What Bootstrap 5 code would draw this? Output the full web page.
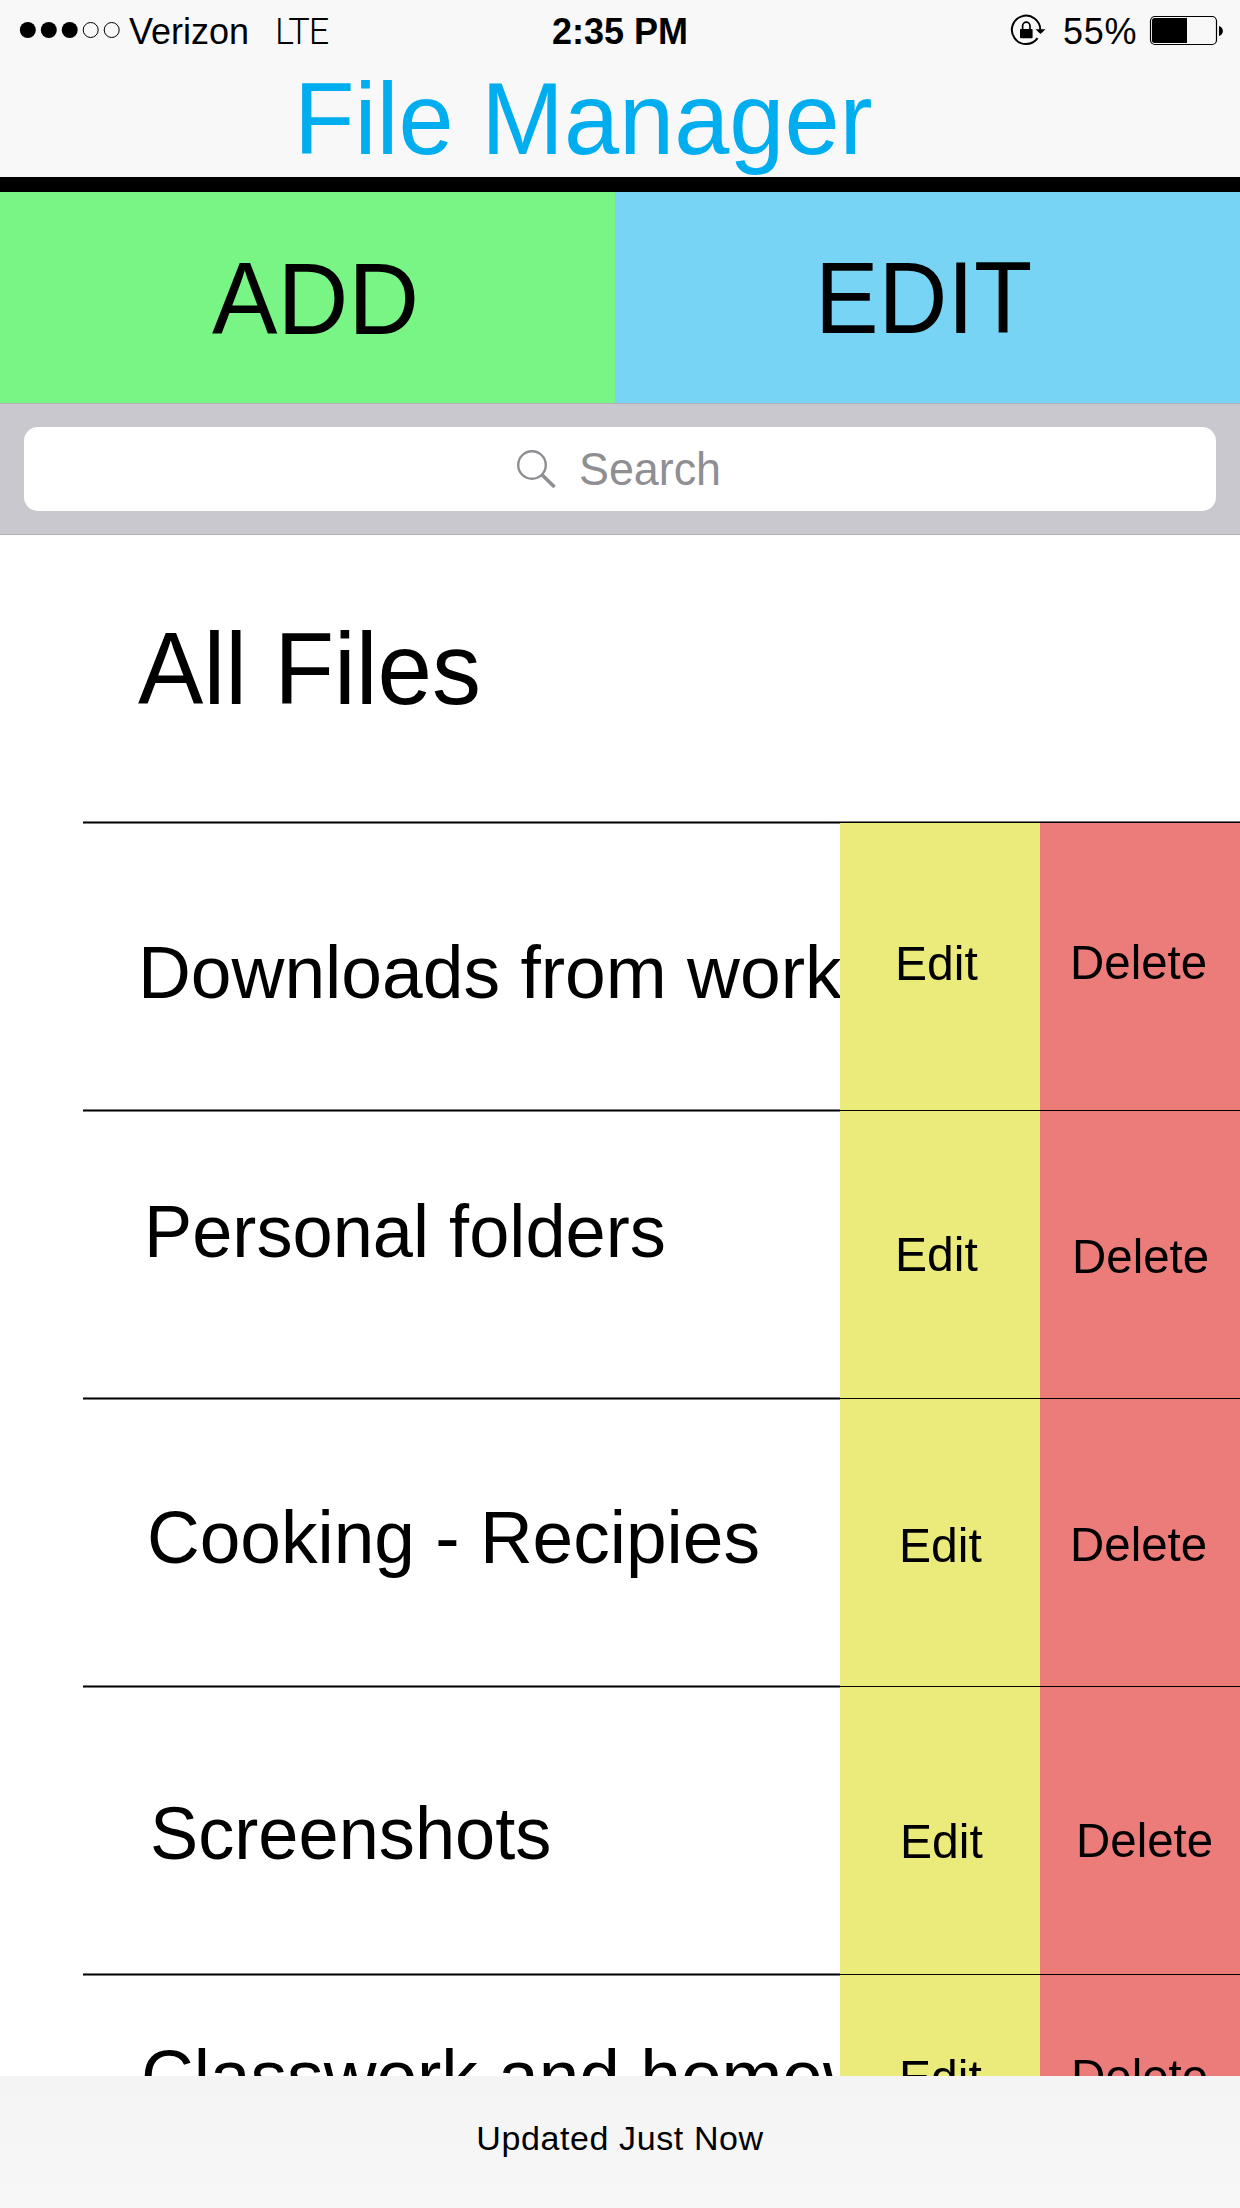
<!DOCTYPE html>
<html lang="en">
<head>
<meta charset="utf-8">
<meta name="viewport" content="width=device-width, initial-scale=1">
<title>File Manager</title>
<link href="https://cdn.jsdelivr.net/npm/bootstrap@5.3.0/dist/css/bootstrap.min.css" rel="stylesheet">
<style>
  body { font-family: "Liberation Sans", Arial, sans-serif; color: #000; line-height: 1; background: #fff; }
  .app { width: 1240px; height: 2208px; }
  .app .btn { --bs-btn-color: #000; --bs-btn-line-height: 1; --bs-btn-font-family: inherit; }
  .fit { display: inline-block; transform-origin: 0 0; white-space: nowrap; }

  .topbar { height: 192px; background: #f8f8f8; border-bottom: 15px solid #000; }
  .status { height: 67px; font-size: 36px; padding-top: 14px; }
  .status svg { display: block; margin-top: -14px; }
  .carrier { width: 146px; }
  .pct { letter-spacing: .8px; margin-right: -2.4px; }
  .net { font-family: Roboto, sans-serif; font-weight: 300; letter-spacing: -1px; }
  .title { font-size: 102px; font-weight: 400; color: #00aeef; padding: 1px 0 0 293.5px; line-height: 102px; }
  .title .fit { transform: scaleX(.972); }

  .actions { height: 211px; font-size: 102px; }
  .btn-add { width: 615px; background: #79f585; padding: 56px 0 0 212px; }
  .btn-edit { background: #78d4f4; padding: 55px 0 0 200px; }
  .btn-add .fit { transform: scaleX(.962); }
  .btn-edit .fit { transform: scaleX(.935); }

  .searchbar { height: 132px; background: #c9c8ce; border-top: 1px solid #b3b2b7; border-bottom: 1px solid #b3b2b7; padding: 23px 24px; }
  .field { height: 84px; border-radius: 14px; color: #8e8e93; font-size: 45.5px; padding: 19px 0 0 491px; }
  .field svg { margin-right: 21.5px; }
  .field span { padding-top: 1px; }
  .field .fit { transform: scaleX(.985); }

  .heading { height: 286px; font-size: 102px; line-height: 1; font-weight: 400; padding: 83px 0 0 137.5px; }
  .heading .fit { transform: scaleX(.961); }

  .file { height: 288px; }
  .fname { width: 757px; margin-left: 83px; font-size: 74px;
    background: linear-gradient(#7a7a7a 1px, #000 1px 2px, #7a7a7a 2px 3px, #fff 3px); }
  .b-edit, .b-del { width: 200px; --bs-btn-font-size: 49px;
    background: linear-gradient(var(--tone) 1px, #000 1px 2px, var(--tone) 2px); }
  .b-edit { --tone: #ebeb7b; }
  .b-del { --tone: #ec7c7a; }
  .file:first-child .b-edit, .file:first-child .b-del { background: linear-gradient(#777 1px, #000 1px 2px, var(--tone) 2px); }
  .b-edit .fit { transform: scaleX(.98); }
  .b-del .fit { transform: scaleX(.968); }

  .f1 .fname { padding: 115px 0 0 55.4px; }  .f1 .fname .fit { transform: scaleX(.989); }
  .f2 .fname { padding: 86px 0 0 61.4px; }   .f2 .fname .fit { transform: scaleX(.976); }
  .f3 .fname { padding: 104px 0 0 64.4px; }  .f3 .fname .fit { transform: scaleX(.987); }
  .f4 .fname { padding: 112px 0 0 67.2px; }  .f4 .fname .fit { transform: scaleX(.976); }
  .f5 .fname { padding: 67px 0 0 58px; }     .f5 .fname .fit { transform: scaleX(.987); }
  .f1 .b-edit { padding: 118px 0 0 55px; }   .f1 .b-del { padding: 117px 0 0 29.8px; }
  .f2 .b-edit { padding: 121px 0 0 55px; }   .f2 .b-del { padding: 123px 0 0 31.7px; }
  .f3 .b-edit { padding: 124px 0 0 58.6px; } .f3 .b-del { padding: 123px 0 0 29.8px; }
  .f4 .b-edit { padding: 132px 0 0 59.8px; } .f4 .b-del { padding: 131px 0 0 35.9px; }
  .f5 .b-edit { padding: 80px 0 0 59px; }    .f5 .b-del { padding: 79px 0 0 30.5px; }

  .foot { height: 132px; background: linear-gradient(#f4f4f4, #f7f7f7); font-size: 34px; letter-spacing: .6px; padding-top: 45px; }
</style>
</head>
<body>
<div class="app d-flex flex-column overflow-hidden">
  <header class="topbar flex-shrink-0">
    <div class="status d-flex">
      <div class="col-4 d-flex">
        <svg width="129" height="60" viewBox="0 0 129 60"><circle cx="27.8" cy="30" r="8"/><circle cx="48.8" cy="30" r="8"/><circle cx="69.7" cy="30" r="8"/><g fill="none" stroke="#000" stroke-width="1"><circle cx="90.7" cy="30" r="7.5"/><circle cx="111.7" cy="30" r="7.5"/></g></svg>
        <span class="carrier">Verizon</span>
        <span class="net">LTE</span>
      </div>
      <div class="col-4 text-center fw-bold">2:35 PM</div>
      <div class="col-4 d-flex justify-content-end">
        <svg width="53" height="60" viewBox="1010 0 53 60"><path d="M1037.6 38.2A14.2 14.2 0 1 1 1040.3 30" fill="none" stroke="#000" stroke-width="2"/><path d="M1035.5 29.3h10l-5 4.8z"/><rect x="1020" y="29" width="12.6" height="9.2" rx=".8"/><path d="M1022.6 29.5v-3.4a3.7 3.9 0 0 1 7.4 0v3.4" fill="none" stroke="#000" stroke-width="1.7"/></svg>
        <span class="pct">55%</span>
        <svg width="105" height="60" viewBox="1135 0 105 60"><rect x="1150.5" y="16.5" width="66" height="28" rx="4.5" fill="none" stroke="#000" stroke-width="1.2"/><path d="M1154.5 18H1187V43H1154.5A2.5 2.5 0 0 1 1152 40.5V20.5A2.5 2.5 0 0 1 1154.500 18z"/><path d="M1219 26c5.200 1.500 5.200 8.500 0 10z"/></svg>
      </div>
    </div>
    <h1 class="title m-0"><span class="fit">File Manager</span></h1>
  </header>

  <div class="actions d-flex flex-shrink-0">
    <div class="btn-add" role="button"><span class="fit">ADD</span></div>
    <div class="btn-edit flex-fill" role="button"><span class="fit">EDIT</span></div>
  </div>

  <div class="searchbar flex-shrink-0">
    <div class="field bg-white d-flex align-items-start">
      <svg width="42" height="44" viewBox="515 446 42 44" fill="none" stroke="#8e8e93"><circle cx="532" cy="465" r="13.800" stroke-width="2.400"/><path d="M541.700 474.500L554.500 487" stroke-width="3.600"/></svg>
      <span class="fit">Search</span>
    </div>
  </div>

  <h2 class="heading m-0 flex-shrink-0"><span class="fit">All Files</span></h2>

  <main class="flex-fill overflow-hidden">
    <div class="file f1 d-flex">
      <div class="fname overflow-hidden"><span class="fit">Downloads from work</span></div>
      <button class="btn b-edit border-0 rounded-0 d-flex align-items-start"><span class="fit">Edit</span></button>
      <button class="btn b-del border-0 rounded-0 d-flex align-items-start"><span class="fit">Delete</span></button>
    </div>
    <div class="file f2 d-flex">
      <div class="fname overflow-hidden"><span class="fit">Personal folders</span></div>
      <button class="btn b-edit border-0 rounded-0 d-flex align-items-start"><span class="fit">Edit</span></button>
      <button class="btn b-del border-0 rounded-0 d-flex align-items-start"><span class="fit">Delete</span></button>
    </div>
    <div class="file f3 d-flex">
      <div class="fname overflow-hidden"><span class="fit">Cooking - Recipies</span></div>
      <button class="btn b-edit border-0 rounded-0 d-flex align-items-start"><span class="fit">Edit</span></button>
      <button class="btn b-del border-0 rounded-0 d-flex align-items-start"><span class="fit">Delete</span></button>
    </div>
    <div class="file f4 d-flex">
      <div class="fname overflow-hidden"><span class="fit">Screenshots</span></div>
      <button class="btn b-edit border-0 rounded-0 d-flex align-items-start"><span class="fit">Edit</span></button>
      <button class="btn b-del border-0 rounded-0 d-flex align-items-start"><span class="fit">Delete</span></button>
    </div>
    <div class="file f5 d-flex">
      <div class="fname overflow-hidden"><span class="fit">Classwork and homework</span></div>
      <button class="btn b-edit border-0 rounded-0 d-flex align-items-start"><span class="fit">Edit</span></button>
      <button class="btn b-del border-0 rounded-0 d-flex align-items-start"><span class="fit">Delete</span></button>
    </div>
  </main>

  <footer class="foot text-center flex-shrink-0">Updated Just Now</footer>
</div>
<script src="https://cdn.jsdelivr.net/npm/bootstrap@5.3.0/dist/js/bootstrap.bundle.min.js"></script>
</body>
</html>
